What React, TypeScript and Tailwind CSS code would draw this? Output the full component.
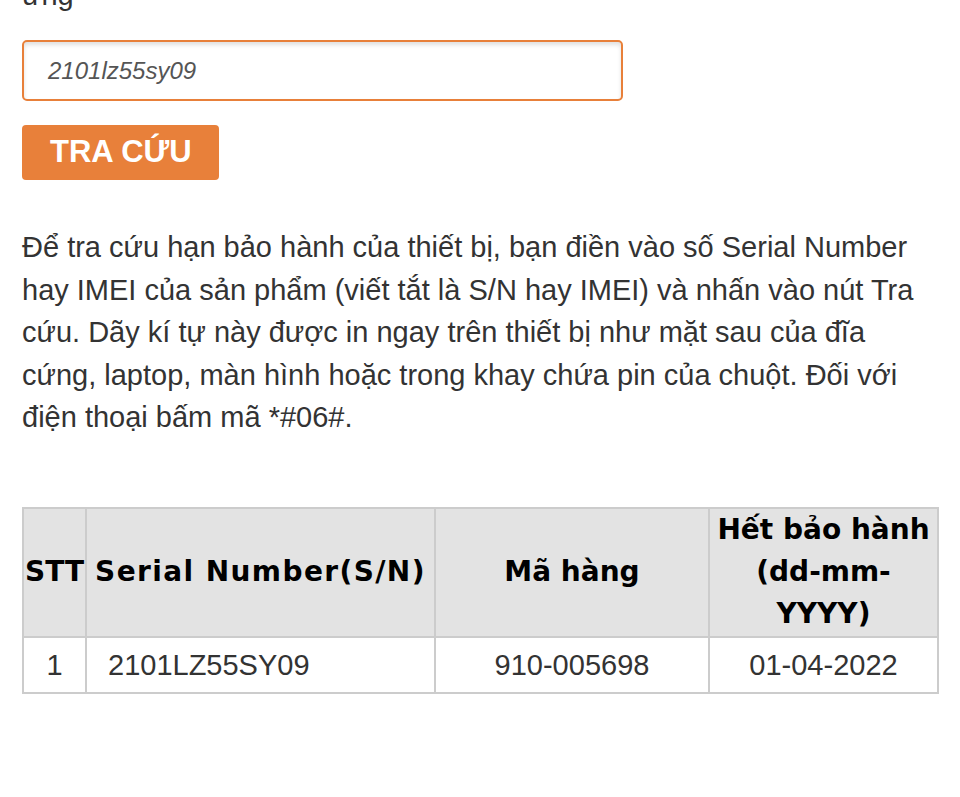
export default function App() {
  const rows = [{ stt: "1", serial: "2101LZ55SY09", code: "910-005698", expires: "01-04-2022" }];

  return (
    <div className="min-h-[797px] overflow-hidden bg-white px-[22px] font-['Liberation_Sans',Arial,sans-serif] text-[#333]">
      <p className="mt-[-26px] text-[29px] leading-[42px]">ứng</p>

      <div className="mt-[24px] flex h-[61px] w-[601px] items-center rounded-[5px] border-2 border-[#e8803a] pl-[24px] shadow-[inset_0_3px_4px_rgba(0,0,0,0.12)]">
        <span className="text-[24px] italic text-[#555]">2101lz55sy09</span>
      </div>

      <button className="mt-[24px] flex h-[55px] w-[197px] items-center rounded-[4px] bg-[#e8803a] pl-[28px] text-[31px] font-bold text-white">
        TRA CỨU
      </button>

      <p className="mt-[46px] w-[910px] text-[29px] leading-[42.5px]">
        Để tra cứu hạn bảo hành của thiết bị, bạn điền vào số Serial Number hay IMEI của sản phẩm (viết tắt là S/N hay IMEI) và nhấn vào nút Tra cứu. Dãy kí tự này được in ngay trên thiết bị như mặt sau của đĩa cứng, laptop, màn hình hoặc trong khay chứa pin của chuột. Đối với điện thoại bấm mã *#06#.
      </p>

      <table className="mt-[68px] w-[915px] table-fixed border-collapse border-2 border-[#ccc]">
        <colgroup>
          <col className="w-[63px]" />
          <col className="w-[349px]" />
          <col className="w-[274px]" />
          <col className="w-[229px]" />
        </colgroup>
        <thead>
          <tr className="h-[129px] bg-[#e3e3e3] font-['DejaVu_Sans',Verdana,sans-serif] text-[28px] font-bold leading-[42px] text-black">
            <th className="border-2 border-[#ccc] px-0">STT</th>
            <th className="border-2 border-[#ccc] px-[2px] tracking-[1.4px]">Serial Number(S/N)</th>
            <th className="border-2 border-[#ccc] px-[2px]">Mã hàng</th>
            <th className="border-2 border-[#ccc] px-[2px]">Hết bảo hành (dd-mm-YYYY)</th>
          </tr>
        </thead>
        <tbody>
          {rows.map((row) => (
            <tr key={row.stt} className="h-[56px] text-[29px] leading-[42px] text-[#333]">
              <td className="border-2 border-[#ccc] text-center">{row.stt}</td>
              <td className="border-2 border-[#ccc] pl-[21px]">{row.serial}</td>
              <td className="border-2 border-[#ccc] text-center">{row.code}</td>
              <td className="border-2 border-[#ccc] text-center">{row.expires}</td>
            </tr>
          ))}
        </tbody>
      </table>
    </div>
  );
}
